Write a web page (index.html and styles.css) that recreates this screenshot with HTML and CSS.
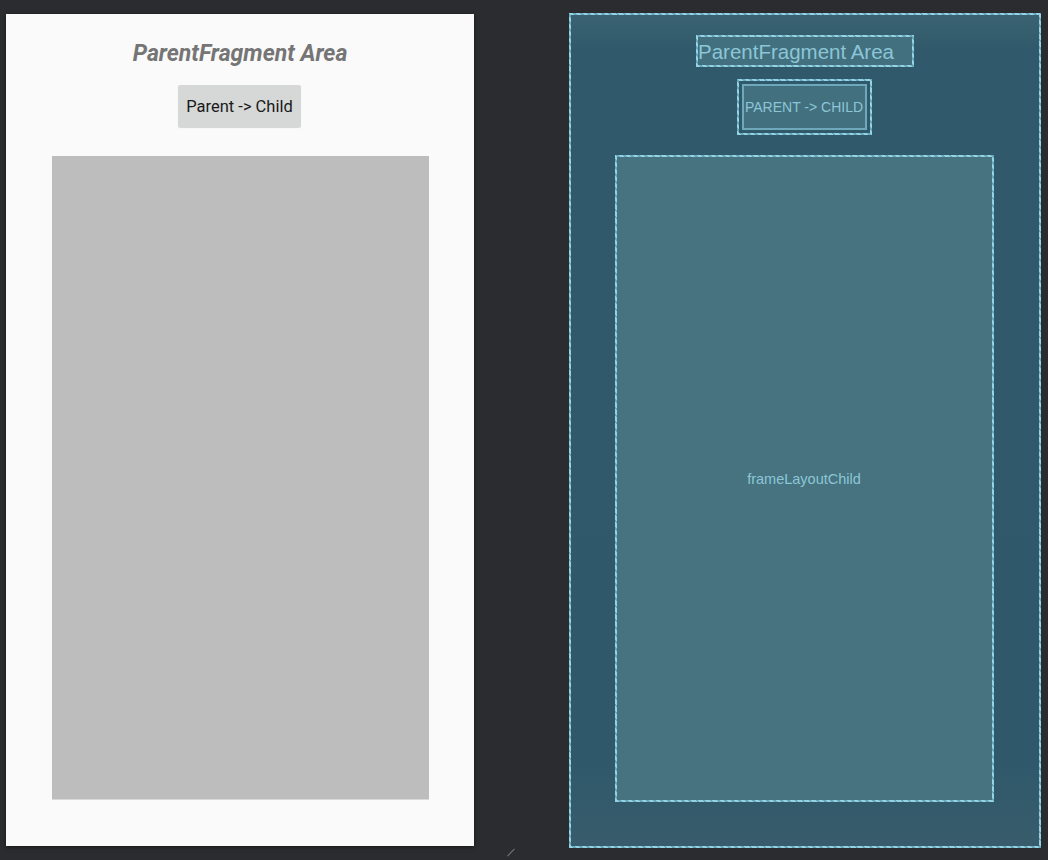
FILE: index.html
```html
<!DOCTYPE html>
<html>
<head>
<meta charset="utf-8">
<link rel="stylesheet" href="styles.css">
</head>
<body>
<div class="stage">
  <div class="device">
    <div class="title">ParentFragment Area</div>
    <div class="btn">Parent -&gt; Child</div>
    <div class="frame"></div>
  </div>
  <div class="blueprint">
    <div class="bp-title">ParentFragment Area</div>
    <div class="bp-btn"><div class="bp-btn-inner">PARENT -&gt; CHILD</div></div>
    <div class="bp-frame">frameLayoutChild</div>
  </div>
</div>
<div class="handle"></div>
</body>
</html>
```
FILE: styles.css
```css
html, body {
  margin: 0;
  padding: 0;
  background: #2b2c2f;
  width: 1048px;
  height: 860px;
  overflow: hidden;
  position: relative;
}
.stage {
  display: flex;
  align-items: flex-start;
  padding: 13px 0 0 6px;
  gap: 95px;
}
.device {
  margin-top: 1px;
  width: 468px;
  height: 832px;
  background: #fafafa;
  box-shadow: 0 1px 4px rgba(0,0,0,0.5);
  display: flex;
  flex-direction: column;
  align-items: center;
  font-family: Roboto, "Noto Sans", sans-serif;
}
.title {
  margin-top: 26px;
  font-size: 23px;
  font-weight: bold;
  font-style: italic;
  color: #757575;
  line-height: 28px;
}
.btn {
  margin-top: 17px;
  width: 123px;
  height: 42px;
  margin-left: -1px;
  background: #d6d7d7;
  border-radius: 2px;
  box-shadow: 0 1px 1px rgba(0,0,0,0.15);
  font-size: 16.5px;
  color: #1a1a1a;
  display: flex;
  align-items: center;
  justify-content: center;
}
.frame {
  margin-top: 29px;
  width: 377px;
  height: 643px;
  background: #bdbdbd;
  border-bottom: 1px solid #d9d9d9;
}
.dashed {
  border: 2px solid #7dbdd0;
}
.blueprint, .bp-title, .bp-btn, .bp-frame {
  border: 2px solid #7dbdd0;
  border-image: repeating-linear-gradient(45deg, #94d3e4 0 3px, #6aa9bc 3px 5px) 2;
}
.blueprint {
  box-sizing: border-box;
  width: 472px;
  height: 835px;
  background: linear-gradient(to bottom, #3a6272 0%, #305a6b 4%, #2f596b 90%, #385c6c 100%);
  display: flex;
  flex-direction: column;
  align-items: center;
  font-family: "Liberation Sans", Arial, sans-serif;
  color: #8cc6d6;
}
.bp-title {
  box-sizing: border-box;
  margin-top: 20px;
  width: 218px;
  height: 32px;
  background: #42707f;
  font-size: 20.5px;
  line-height: 30px;
  white-space: nowrap;
}
.bp-btn {
  box-sizing: border-box;
  margin-top: 12px;
  width: 135px;
  height: 56px;
  padding: 3px;
  margin-left: -2px;
}
.bp-btn-inner {
  box-sizing: border-box;
  height: 100%;
  border: 2px solid #6fa8ba;
  background: #42707f;
  font-size: 14px;
  display: flex;
  align-items: center;
  justify-content: center;
  white-space: nowrap;
}
.bp-frame {
  box-sizing: border-box;
  margin-top: 20px;
  margin-left: -2px;
  width: 379px;
  height: 647px;
  background: #46737f;
  font-size: 14.5px;
  display: flex;
  align-items: center;
  justify-content: center;
}
.handle {
  position: absolute;
  left: 506px;
  top: 852px;
  width: 10px;
  height: 1px;
  background: #777;
  transform: rotate(-45deg);
}
```
